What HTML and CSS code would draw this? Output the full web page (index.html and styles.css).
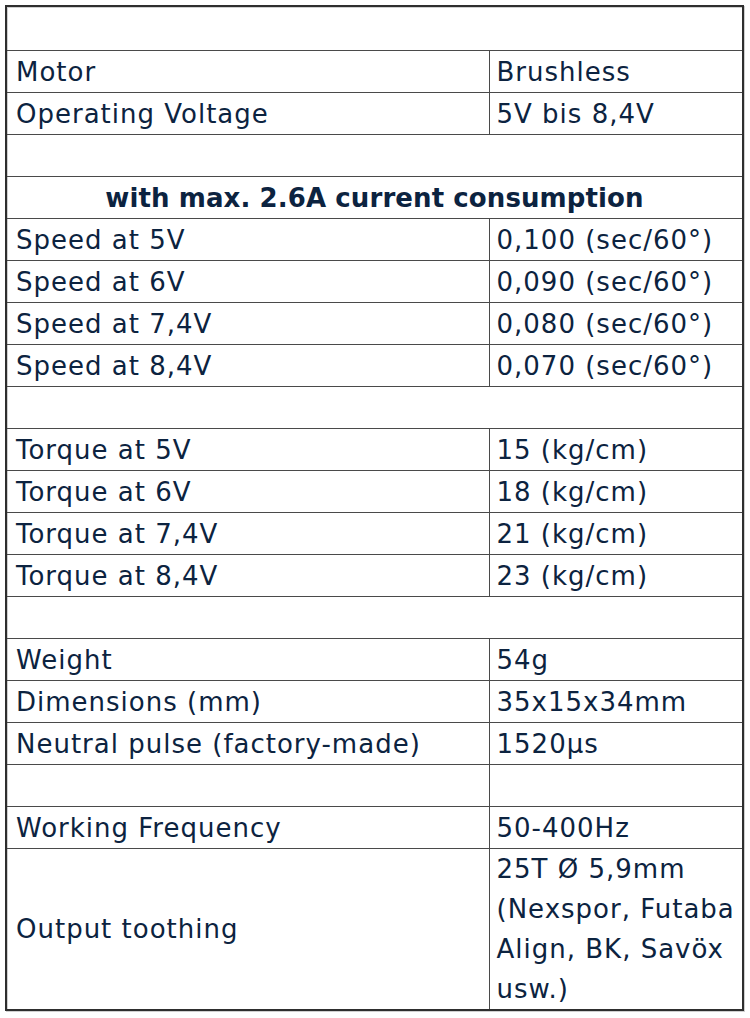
FILE: index.html
```html
<!DOCTYPE html>
<html>
<head>
<meta charset="utf-8">
<link rel="stylesheet" href="styles.css">
</head>
<body>
<table class="spec">
  <colgroup><col class="c1"><col class="c2"></colgroup>
  <tr><td colspan="2" class="blank first"></td></tr>
  <tr><td class="k">Motor</td><td class="v">Brushless</td></tr>
  <tr><td class="k">Operating Voltage</td><td class="v">5V bis 8,4V</td></tr>
  <tr><td colspan="2" class="blank"></td></tr>
  <tr><td colspan="2" class="head">with max. 2.6A current consumption</td></tr>
  <tr><td class="k">Speed at 5V</td><td class="v">0,100 (sec/60°)</td></tr>
  <tr><td class="k">Speed at 6V</td><td class="v">0,090 (sec/60°)</td></tr>
  <tr><td class="k">Speed at 7,4V</td><td class="v">0,080 (sec/60°)</td></tr>
  <tr><td class="k">Speed at 8,4V</td><td class="v">0,070 (sec/60°)</td></tr>
  <tr><td colspan="2" class="blank"></td></tr>
  <tr><td class="k">Torque at 5V</td><td class="v">15 (kg/cm)</td></tr>
  <tr><td class="k">Torque at 6V</td><td class="v">18 (kg/cm)</td></tr>
  <tr><td class="k">Torque at 7,4V</td><td class="v">21 (kg/cm)</td></tr>
  <tr><td class="k">Torque at 8,4V</td><td class="v">23 (kg/cm)</td></tr>
  <tr><td colspan="2" class="blank"></td></tr>
  <tr><td class="k">Weight</td><td class="v">54g</td></tr>
  <tr><td class="k">Dimensions (mm)</td><td class="v">35x15x34mm</td></tr>
  <tr><td class="k">Neutral pulse (factory-made)</td><td class="v">1520µs</td></tr>
  <tr><td class="k blank"></td><td class="v blank"></td></tr>
  <tr><td class="k">Working Frequency</td><td class="v">50-400Hz</td></tr>
  <tr><td class="k">Output toothing</td><td class="v">25T Ø 5,9mm (Nexspor, Futaba Align, BK, Savöx usw.)</td></tr>
</table>
</body>
</html>
```

FILE: styles.css
```css
html, body {
  margin: 0;
  padding: 0;
  background: #ffffff;
}
body {
  padding: 5px;
}
.spec {
  width: 739px;
  border-collapse: collapse;
  border: 2px solid #2e2e2e;
  box-shadow: inset 1px 1px 0 #cfcfcf, 1px 1px 0 #cfcfcf;
  font-family: "DejaVu Sans", "Liberation Sans", sans-serif;
  font-size: 26px;
  letter-spacing: 1px;
  color: #0c2340;
  table-layout: fixed;
}
.spec .c1 {
  width: 483px;
}
.spec td {
  border: 1px solid #4a4a4a;
  padding: 0 8px;
  height: 41px;
  line-height: 40px;
  vertical-align: middle;
  text-align: left;
}
.spec td.k {
  padding-left: 9px;
}
.spec td.v {
  padding-left: 7px;
  padding-right: 2px;
}
.spec td.head {
  text-align: center;
  font-weight: 700;
  letter-spacing: 0.1px;
}
.spec td.blank {
  height: 41px;
}
.spec td.first {
  height: 43px;
}
```
